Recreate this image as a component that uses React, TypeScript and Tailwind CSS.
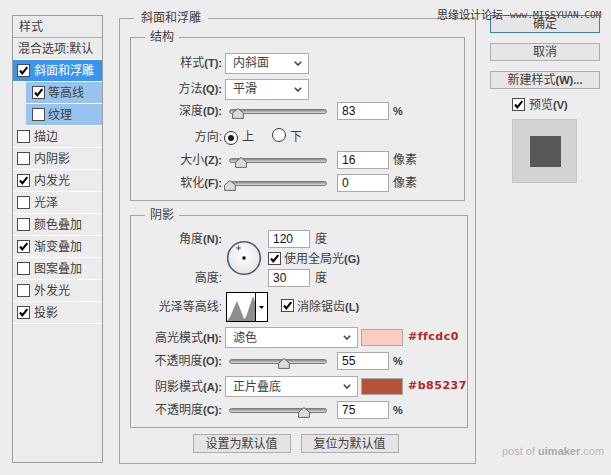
import React from "react";

type LblProps = { t: string; k?: string };

function Lbl({ t, k }: LblProps) {
  return (
    <>
      {t}
      {k && <span className="text-[11px] font-bold">{k}</span>}
    </>
  );
}

function Check({ on = false }: { on?: boolean }) {
  return (
    <span className="inline-flex h-[13px] w-[13px] shrink-0 items-center justify-center border border-[#4a4a4a] bg-white">
      {on && (
        <svg width="11" height="11" viewBox="0 0 11 11">
          <path d="M2 5.5 L4.3 8.4 L9.3 2.2" fill="none" stroke="#000" strokeWidth="2.1" />
        </svg>
      )}
    </span>
  );
}

function Radio({ on = false }: { on?: boolean }) {
  return (
    <span className="inline-flex h-[14px] w-[14px] shrink-0 items-center justify-center rounded-full border border-[#333] bg-white">
      {on && <span className="h-[6px] w-[6px] rounded-full bg-[#1a1a1a]" />}
    </span>
  );
}

function Chevron() {
  return (
    <svg width="8" height="5" viewBox="0 0 8 5">
      <path d="M0.8 0.8 L4 4 L7.2 0.8" fill="none" stroke="#444" strokeWidth="1.6" />
    </svg>
  );
}

function Select({ value, w }: { value: string; w: string }) {
  return (
    <div className={`ml-[3px] flex h-[21px] ${w} items-center justify-between border border-[#acacac] bg-white pl-[7px] pr-[6px]`}>
      <span>{value}</span>
      <Chevron />
    </div>
  );
}

function Field({ value, w = "w-[52px]" }: { value: string; w?: string }) {
  return (
    <div className={`flex h-[18px] ${w} items-center border border-[#a9a9a9] bg-white pl-[4px] text-[12px] text-[#111]`}>
      {value}
    </div>
  );
}

function Slider({ pos }: { pos: number }) {
  return (
    <div className="relative ml-[7px] h-[18px] w-[98px]">
      <div className="mt-[7px] h-[5px] rounded-full border border-[#7c7c7c] bg-linear-to-b from-[#8a8a8a] to-[#dadada]" />
      <svg className="absolute top-[6px]" style={{ left: pos - 6 }} width="12" height="11" viewBox="0 0 12 11">
        <path d="M6 0.6 L11.4 5 V10.4 H0.6 V5 Z" fill="#dcdcdc" stroke="#666" strokeWidth="1" />
      </svg>
    </div>
  );
}

function SliderRow({ t, k, pos, value, unit, cls }: { t: string; k: string; pos: number; value: string; unit: string; cls: string }) {
  return (
    <div className={`flex h-[18px] items-center ${cls}`}>
      <div className="w-[91px] text-right">
        <Lbl t={t} k={k} />
      </div>
      <Slider pos={pos} />
      <div className="ml-[10px]">
        <Field value={value} />
      </div>
      <span className={`ml-[4px] ${unit === "%" ? "font-bold text-[11px]" : ""}`}>{unit}</span>
    </div>
  );
}

const effects: [string, boolean][] = [
  ["描边", false],
  ["内阴影", false],
  ["内发光", true],
  ["光泽", false],
  ["颜色叠加", false],
  ["渐变叠加", true],
  ["图案叠加", false],
  ["外发光", false],
  ["投影", true],
];

function StyleList() {
  return (
    <div className="ml-[12px] mt-[15px] h-[448px] w-[91px] border border-[#9c9c9c] bg-[#ececec]">
      <div className="flex h-[22px] items-center border-b border-[#b4b4b4] pl-[6px]">样式</div>
      <div className="flex h-[22px] items-center border-b border-white pl-[5px]">混合选项:默认</div>
      <div className="flex h-[22px] items-center gap-[4px] border-b border-white bg-[#3b94ee] pl-[4px] text-white">
        <Check on />
        <span>斜面和浮雕</span>
      </div>
      <div className="ml-[13px] flex h-[22px] items-center gap-[3px] border-b border-white bg-[#98c3ee] pl-[6px]">
        <Check on />
        <span>等高线</span>
      </div>
      <div className="ml-[13px] flex h-[22px] items-center gap-[3px] border-b border-white bg-[#98c3ee] pl-[6px]">
        <Check />
        <span>纹理</span>
      </div>
      {effects.map(([name, on]) => (
        <div key={name} className="flex h-[22px] items-center gap-[4px] border-b border-white pl-[4px]">
          <Check on={on} />
          <span>{name}</span>
        </div>
      ))}
    </div>
  );
}

function AngleDial() {
  return (
    <svg className="ml-[4px] mt-[10px]" width="36" height="36" viewBox="0 0 36 36">
      <defs>
        <radialGradient id="dial" cx="50%" cy="40%" r="60%">
          <stop offset="0%" stopColor="#ffffff" />
          <stop offset="100%" stopColor="#e4e4e4" />
        </radialGradient>
      </defs>
      <circle cx="18" cy="18" r="16.3" fill="url(#dial)" stroke="#4f5e6d" strokeWidth="1.6" />
      <path d="M12.5 5.5 V10.5 M10 8 H15" stroke="#444" strokeWidth="0.9" />
      <rect x="16.5" y="16.5" width="3" height="3" fill="#000" />
    </svg>
  );
}

function Contour() {
  return (
    <div className="ml-[4px] flex h-[30px] w-[42px] border border-black bg-white">
      <svg width="28" height="28" viewBox="0 0 28 28">
        <polygon points="0,28 3,24 10,8 14,18 17,26 19,24 23,12 26,3 28,9 28,28" fill="#8e8e8e" />
      </svg>
      <div className="flex flex-1 items-center justify-center border-l border-black">
        <svg width="5" height="3" viewBox="0 0 5 3">
          <path d="M0 0 H5 L2.5 3 Z" fill="#000" />
        </svg>
      </div>
    </div>
  );
}

function MainPanel() {
  return (
    <fieldset className="ml-[16px] mt-[9px] h-[455px] w-[357px] border border-[#a3a3a3]">
      <legend className="ml-[14px] px-[7px] leading-[18px]">斜面和浮雕</legend>

      <fieldset className="ml-[10px] mt-[1px] w-[335px] border border-[#a3a3a3] pb-[8px]">
        <legend className="ml-[14px] px-[5px] leading-[18px]">结构</legend>
        <div className="mt-[6px] flex h-[22px] items-center">
          <div className="w-[91px] text-right">
            <Lbl t="样式" k="(T):" />
          </div>
          <Select value="内斜面" w="w-[84px]" />
        </div>
        <div className="mt-[4px] flex h-[22px] items-center">
          <div className="w-[91px] text-right">
            <Lbl t="方法" k="(Q):" />
          </div>
          <Select value="平滑" w="w-[84px]" />
        </div>
        <SliderRow cls="mt-[2px]" t="深度" k="(D):" pos={9} value="83" unit="%" />
        <div className="mt-[8px] flex h-[18px] items-center">
          <div className="w-[91px] text-right">方向:</div>
          <span className="ml-[2px]">
            <Radio on />
          </span>
          <span className="ml-[4px]">上</span>
          <span className="ml-[18px]">
            <Radio />
          </span>
          <span className="ml-[4px]">下</span>
        </div>
        <SliderRow cls="mt-[5px]" t="大小" k="(Z):" pos={12} value="16" unit="像素" />
        <SliderRow cls="mt-[5px]" t="软化" k="(F):" pos={1} value="0" unit="像素" />
      </fieldset>

      <fieldset className="ml-[10px] mt-[5px] w-[335px] border border-[#a3a3a3] pb-[8px]">
        <legend className="ml-[14px] px-[5px] leading-[18px]">阴影</legend>
        <div className="mt-[6px] flex h-[57px] items-start">
          <div className="flex h-[57px] w-[91px] flex-col justify-between text-right">
            <div className="leading-[18px]">
              <Lbl t="角度" k="(N):" />
            </div>
            <div className="leading-[18px]">高度:</div>
          </div>
          <AngleDial />
          <div className="ml-[6px] flex flex-col">
            <div className="flex h-[18px] items-center">
              <Field value="120" w="w-[42px]" />
              <span className="ml-[5px]">度</span>
            </div>
            <div className="flex h-[21px] items-center gap-[3px]">
              <Check on />
              <span>
                <Lbl t="使用全局光" k="(G)" />
              </span>
            </div>
            <div className="flex h-[18px] items-center">
              <Field value="30" w="w-[42px]" />
              <span className="ml-[5px]">度</span>
            </div>
          </div>
        </div>
        <div className="mt-[5px] flex h-[30px] items-center">
          <div className="w-[91px] text-right">光泽等高线:</div>
          <Contour />
          <span className="ml-[13px]">
            <Check on />
          </span>
          <span className="ml-[3px]">
            <Lbl t="消除锯齿" k="(L)" />
          </span>
        </div>
        <div className="mt-[5px] flex h-[21px] items-center">
          <div className="w-[91px] text-right">
            <Lbl t="高光模式" k="(H):" />
          </div>
          <Select value="滤色" w="w-[133px]" />
          <div className="ml-[3px] h-[17px] w-[42px] border border-[#a8a8a8] bg-[#ffcdc0]" />
          <span className="ml-[5px] font-[family-name:DejaVu_Sans] text-[11px] font-bold tracking-[0.5px] text-[#b3262b]">#ffcdc0</span>
        </div>
        <SliderRow cls="mt-[4px]" t="不透明度" k="(O):" pos={55} value="55" unit="%" />
        <div className="mt-[6px] flex h-[21px] items-center">
          <div className="w-[91px] text-right">
            <Lbl t="阴影模式" k="(A):" />
          </div>
          <Select value="正片叠底" w="w-[133px]" />
          <div className="ml-[3px] h-[17px] w-[42px] border border-[#a8a8a8] bg-[#b85237]" />
          <span className="ml-[5px] font-[family-name:DejaVu_Sans] text-[11px] font-bold tracking-[0.5px] text-[#b3262b]">#b85237</span>
        </div>
        <SliderRow cls="mt-[4px]" t="不透明度" k="(C):" pos={75} value="75" unit="%" />
      </fieldset>

      <div className="mt-[6px] flex justify-center gap-[10px] pr-[4px]">
        <div className="flex h-[19px] w-[98px] items-center justify-center border border-[#adadad] bg-[#e4e4e4]">设置为默认值</div>
        <div className="flex h-[19px] w-[98px] items-center justify-center border border-[#adadad] bg-[#e4e4e4]">复位为默认值</div>
      </div>
    </fieldset>
  );
}

function RightColumn() {
  return (
    <div className="ml-[14px] mt-[15px] flex w-[110px] flex-col">
      <div className="flex h-[18px] items-center justify-center border border-[#3c7fb1] bg-[#e6e6e6]">确定</div>
      <div className="mt-[10px] flex h-[18px] items-center justify-center border border-[#adadad] bg-[#e6e6e6]">取消</div>
      <div className="mt-[10px] flex h-[18px] items-center justify-center border border-[#adadad] bg-[#e6e6e6]">
        <Lbl t="新建样式" k="(W)..." />
      </div>
      <div className="mt-[8px] flex h-[15px] items-center gap-[4px] pl-[22px]">
        <Check on />
        <span>
          <Lbl t="预览" k="(V)" />
        </span>
      </div>
      <div className="ml-[22px] mt-[7px] flex h-[64px] w-[65px] items-center justify-center border border-[#c6c6c6] bg-[#d3d3d3]">
        <div className="ml-[1px] h-[31px] w-[31px] bg-[#575757]" />
      </div>
    </div>
  );
}

export default function App() {
  return (
    <div className="relative flex h-[475px] w-[611px] items-start overflow-hidden bg-[#ededed] font-[family-name:Liberation_Sans,Noto_Sans_CJK_SC,sans-serif] text-[12px] text-[#404040]">
      <StyleList />
      <MainPanel />
      <RightColumn />

      {/* watermark over the top-right corner */}
      <div className="absolute left-[437px] top-[7px] flex items-center">
        <span className="text-[11px] leading-[16px] text-[#333]">思缘设计论坛</span>
        <span className="mx-[1px] h-px w-[5px] bg-[#555]" />
        <span className="font-[family-name:DejaVu_Sans_Mono] text-[9.5px] leading-[16px] text-[#444]">www.MISSYUAN.COM</span>
      </div>

      <div className="absolute left-[502px] top-[443px] text-[11px] text-[#b8b8b8]">
        post of <span className="font-bold text-[#a9a9a9]">uimaker</span>.com
      </div>
    </div>
  );
}
